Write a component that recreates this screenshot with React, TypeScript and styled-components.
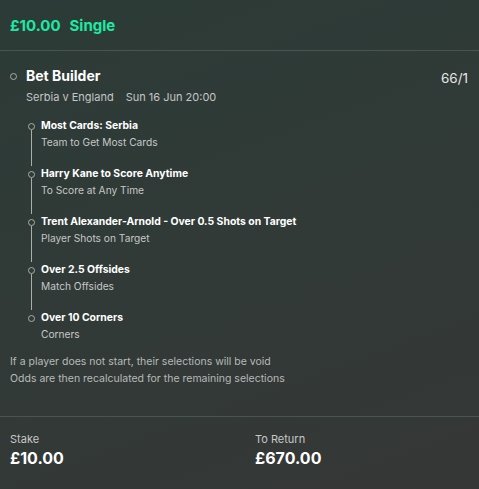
import styled, { createGlobalStyle } from 'styled-components';

type Leg = {
  title: string;
  market: string;
};

const legs: Leg[] = [
  { title: 'Most Cards: Serbia', market: 'Team to Get Most Cards' },
  { title: 'Harry Kane to Score Anytime', market: 'To Score at Any Time' },
  { title: 'Trent Alexander-Arnold - Over 0.5 Shots on Target', market: 'Player Shots on Target' },
  { title: 'Over 2.5 Offsides', market: 'Match Offsides' },
  { title: 'Over 10 Corners', market: 'Corners' },
];

const GlobalStyle = createGlobalStyle`
  html, body {
    margin: 0;
    padding: 0;
    background: #313836;
  }
  body {
    font-family: Inter, 'Liberation Sans', Arial, sans-serif;
    -webkit-font-smoothing: antialiased;
  }
`;

const App = () => {
  return (
    <>
      <GlobalStyle />
      <Slip>
        <Header>
          <span>£10.00</span>
          <span>Single</span>
        </Header>
        <Body>
          <BuilderRow>
            <Dot />
            <BuilderTitle>Bet Builder</BuilderTitle>
            <Odds>66/1</Odds>
          </BuilderRow>
          <EventLine>
            <span>Serbia v England</span>
            <span>Sun 16 Jun 20:00</span>
          </EventLine>
          <Legs>
            {legs.map((leg, i) => (
              <LegRow key={leg.title}>
                <Rail>
                  <Dot />
                  <RailLine $last={i === legs.length - 1} />
                </Rail>
                <LegContent $last={i === legs.length - 1}>
                  <LegTitle>{leg.title}</LegTitle>
                  <LegMarket>{leg.market}</LegMarket>
                </LegContent>
              </LegRow>
            ))}
          </Legs>
          <Note>
            If a player does not start, their selections will be void
            <br />
            Odds are then recalculated for the remaining selections
          </Note>
        </Body>
        <Footer>
          <Figure>
            <FigureLabel>Stake</FigureLabel>
            <FigureValue>£10.00</FigureValue>
          </Figure>
          <Figure>
            <FigureLabel>To Return</FigureLabel>
            <FigureValue>£670.00</FigureValue>
          </Figure>
        </Footer>
      </Slip>
    </>
  );
};

const Slip = styled.div`
  width: 479px;
  height: 489px;
  overflow: hidden;
  background: linear-gradient(160deg, #2c3b37 0%, #313a37 50%, #353736 100%);
  color: #fff;
`;

const Header = styled.div`
  height: 50px;
  display: flex;
  align-items: center;
  gap: 9px;
  padding: 0 10px;
  border-bottom: 1px solid #4a5451;
  color: #1de9a3;
  font-size: 15px;
  font-weight: 700;
`;

const Body = styled.div`
  padding: 16px 11px 0 10px;
`;

const BuilderRow = styled.div`
  display: flex;
  align-items: center;
  height: 18px;
`;

const Dot = styled.span`
  box-sizing: border-box;
  width: 7px;
  height: 7px;
  flex-shrink: 0;
  border: 1px solid #a9adab;
  border-radius: 50%;
`;

const BuilderTitle = styled.div`
  margin-left: 9px;
  font-size: 14px;
  font-weight: 700;
  line-height: 18px;
`;

const Odds = styled.div`
  margin-left: auto;
  padding-top: 4px;
  font-size: 13.5px;
  color: #e6e6e6;
`;

const EventLine = styled.div`
  display: flex;
  gap: 12px;
  margin: 4px 0 0 16px;
  font-size: 11px;
  line-height: 16px;
  color: #c4c6c5;
`;

const Legs = styled.div`
  margin: 13px 0 0 17px;
`;

const LegRow = styled.div`
  display: flex;
  gap: 6px;
`;

const Rail = styled.div`
  width: 8px;
  display: flex;
  flex-direction: column;
  align-items: center;
  padding-top: 5px;
`;

const RailLine = styled.div<{ $last: boolean }>`
  flex: 1;
  width: 1px;
  background: ${({ $last }) => ($last ? 'transparent' : '#a9adab')};
`;

const LegContent = styled.div<{ $last: boolean }>`
  padding-bottom: ${({ $last }) => ($last ? '0' : '16px')};
`;

const LegTitle = styled.div`
  font-size: 10.4px;
  font-weight: 700;
  line-height: 16px;
`;

const LegMarket = styled.div`
  font-size: 10.2px;
  line-height: 16px;
  color: #c6c8c7;
`;

const Note = styled.div`
  margin-top: 11px;
  font-size: 10.5px;
  line-height: 17px;
  color: #b7bab8;
`;

const Footer = styled.div`
  margin-top: 29px;
  border-top: 1px solid #4a5451;
  padding: 15px 10px 0;
  display: grid;
  grid-template-columns: 245px 1fr;
`;

const Figure = styled.div`
  display: flex;
  flex-direction: column;
  gap: 2px;
`;

const FigureLabel = styled.div`
  font-size: 11px;
  line-height: 14px;
  color: #c6c8c7;
`;

const FigureValue = styled.div`
  font-size: 16px;
  font-weight: 700;
  line-height: 20px;
`;

export default App;
